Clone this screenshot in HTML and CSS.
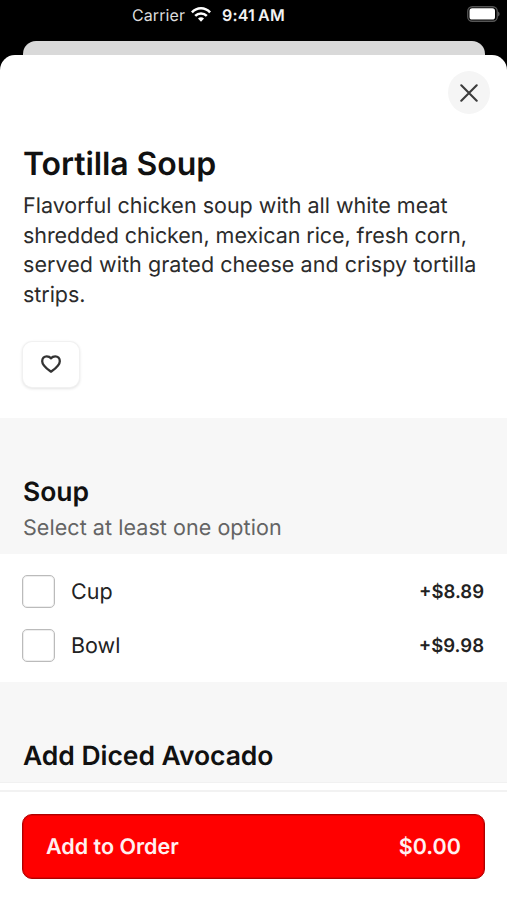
FILE: index.html
```html
<!DOCTYPE html>
<html lang="en">
<head>
<meta charset="utf-8">
<meta name="viewport" content="width=device-width, initial-scale=1">
<title>Tortilla Soup</title>
<link rel="stylesheet" href="styles.css">
</head>
<body>
<div class="screen">
  <header class="status">
    <span class="carrier">Carrier</span>
    <svg class="wifi" viewBox="0 0 20 15" width="20" height="15" fill="none" stroke="#fff" stroke-width="2.5">
      <path d="M.9 5.4C6-.1 14-.1 19.1 5.4"/>
      <path d="M4.2 8.9c3.2-3.3 8.4-3.3 11.6 0"/>
      <path d="M10 14.7l-3-3.2c1.7-1.7 4.3-1.7 6 0z" fill="#fff" stroke="none"/>
    </svg>
    <span class="time">9:41<span class="meridiem">AM</span></span>
    <svg class="battery" viewBox="0 0 34 16" width="34" height="16">
      <rect x=".75" y=".75" width="29.5" height="14.5" rx="4.5" fill="none" stroke="#555" stroke-width="1.3"/>
      <rect x="2.5" y="2.3" width="25.5" height="11.2" rx="2.6" fill="#fff"/>
      <path d="M31.2 5.4c1.8 1 1.8 4.2 0 5.2z" fill="#666"/>
    </svg>
  </header>
  <div class="backdrop"></div>
  <main class="sheet">
    <section class="intro">
      <button class="close" aria-label="Close">
        <svg viewBox="0 0 18 18" width="18" height="18" fill="none" stroke="#3c3c3c" stroke-width="2.1" stroke-linecap="round"><path d="M1.3 1.3l15.4 15.4M16.7 1.3L1.3 16.7"/></svg>
      </button>
      <h1 class="title">Tortilla Soup</h1>
      <p class="description">Flavorful chicken soup with all white meat<br><span class="snug">shredded chicken, mexican rice, fresh corn,</span><br><span class="airy">served with grated cheese and crispy tortilla</span><br><span class="snug">strips.</span></p>
      <button class="favorite" aria-label="Favorite">
        <svg viewBox="0 0 20 18" width="20" height="18" fill="none" stroke="#333" stroke-width="2.3" stroke-linejoin="round"><path d="M10 16.7C6.5 14.2 1.2 10.7 1.2 6.2 1.2 3.3 3.2 1.3 5.7 1.3c1.8 0 3.3.7 4.3 2 1-1.3 2.5-2 4.3-2 2.5 0 4.5 2 4.5 4.9 0 4.5-5.3 8-8.8 10.5z"/></svg>
      </button>
    </section>
    <section class="group-head">
      <h2 class="group-title">Soup</h2>
      <p class="hint">Select at least one option</p>
    </section>
    <section class="options">
      <label class="option"><span class="box"></span><span class="name">Cup</span><span class="price">+$8.89</span></label>
      <label class="option"><span class="box"></span><span class="name">Bowl</span><span class="price">+$9.98</span></label>
    </section>
    <section class="group-head next">
      <h2 class="group-title">Add Diced Avocado</h2>
    </section>
  </main>
  <footer class="footer">
    <div class="rule"></div>
    <button class="order"><span class="order-label">Add to Order</span><span class="order-total">$0.00</span></button>
  </footer>
</div>
</body>
</html>
```
FILE: styles.css
```css
* { box-sizing: border-box; }
body { margin: 0; background: #000; font-family: Inter, "Liberation Sans", sans-serif; color: #111; text-rendering: geometricPrecision; }
h1, h2, p { margin: 0; }
button { font: inherit; border: 0; padding: 0; text-rendering: inherit; }
svg { display: block; flex: none; }
.screen { width: 507px; height: 900px; overflow: hidden; display: flex; flex-direction: column; background: #000; }
.status { height: 41px; flex: none; display: flex; align-items: center; padding: 0 6px 12px 132px; color: #fff; font-size: 16px; line-height: 20px; white-space: nowrap; }
.carrier { width: 59px; color: #ddd; letter-spacing: .1px; }
.time { margin-left: 11px; font-weight: 600; color: #f2f2f2; letter-spacing: .2px; }
.meridiem { margin-left: 3px; }
.battery { margin-left: auto; margin-top: -2px; }
.backdrop { height: 28px; flex: none; margin: 0 22px 0 23px; background: #d9d9d9; border-radius: 13px 13px 0 0; }
.sheet { flex: 1; min-height: 0; margin-top: -14px; background: #fff; border-radius: 15px 15px 0 0; overflow: hidden; }
.intro { height: 363px; padding: 16px 17px 0 23px; display: flex; flex-direction: column; align-items: flex-start; }
.close { width: 42px; height: 43px; border-radius: 50%; background: #f5f5f5; align-self: flex-end; display: grid; place-items: center; flex: none; }
.title { margin-top: 30px; font-size: 32px; line-height: 40px; font-weight: 600; letter-spacing: -.07px; white-space: nowrap; }
.description { margin-top: 8px; font-size: 21.5px; line-height: 29.7px; color: #2b2b2b; white-space: nowrap; }
.snug { letter-spacing: -.06px; }
.airy { letter-spacing: .05px; }
.favorite { margin: 31px 0 0; width: 56px; height: 45px; border-radius: 9px; background: #fff; box-shadow: 0 0 0 1px #f1f1f1, 0 1px 3px 1px #e4e4e4; display: grid; place-items: center; }
.group-head { height: 136px; background: #f7f7f7; padding: 57px 23px 0; }
.group-title { font-size: 26.5px; line-height: 34px; font-weight: 600; letter-spacing: -.05px; white-space: nowrap; }
.hint { margin-top: 4px; font-size: 21.5px; line-height: 30px; color: #646464; letter-spacing: .06px; white-space: nowrap; }
.options { height: 128px; padding: 20px 23px 0 22px; display: flex; flex-direction: column; gap: 20px; }
.option { height: 34px; display: flex; align-items: center; }
.box { width: 33px; height: 33px; border: 1.5px solid #bbb; border-radius: 5px; margin-right: 16px; background: #fff; box-shadow: inset 0 0 0 1px #eee; }
.name { padding-top: 2px; font-size: 21.5px; line-height: 30px; color: #222; }
.price { margin-left: auto; padding-top: 2px; font-size: 18.5px; font-weight: 600; line-height: 28px; color: #222; }
.next { height: 100px; }
.footer { flex: none; height: 118px; background: #fff; border-top: 1px solid #f1f1f1; padding: 0 22px; }
.rule { height: 9px; margin: 0 -22px 22px; border-bottom: 2px solid #f2f2f2; }
.order { width: 463px; height: 65px; border-radius: 10px; background: #f00; border: 1px solid #b00000; box-shadow: inset 0 0 0 1px #e00000; display: flex; align-items: center; justify-content: space-between; padding: 0 23px; color: #fff0f0; font-size: 21.5px; font-weight: 600; line-height: 30px; }
```
